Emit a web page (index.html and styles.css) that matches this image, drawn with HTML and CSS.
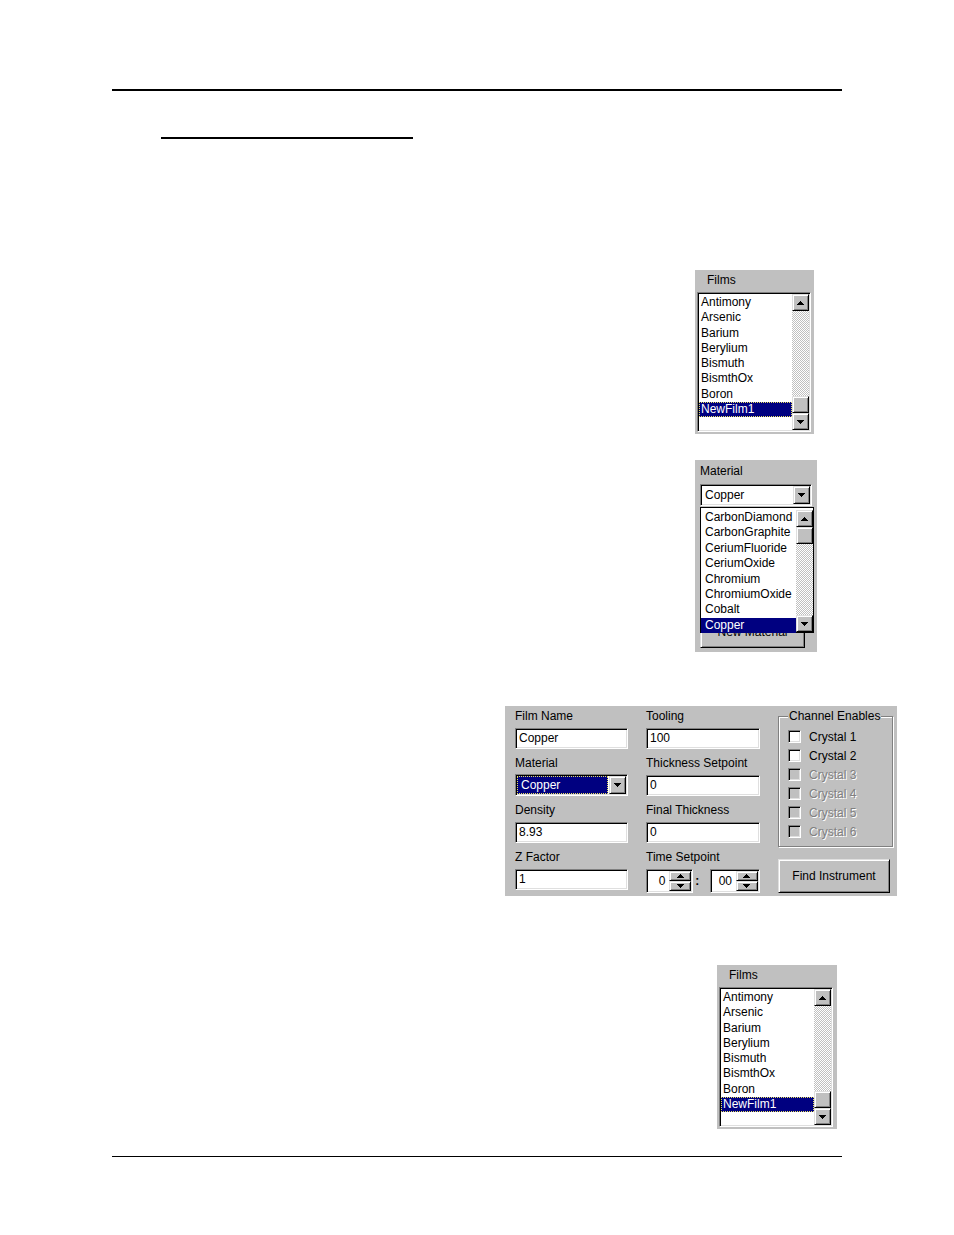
FILE: index.html
```html
<!DOCTYPE html>
<html lang="en">
<head>
<meta charset="utf-8">
<title>Films</title>
<link rel="stylesheet" href="styles.css">
</head>
<body>
<div class="page">
  <div class="rule rule-top"></div>
  <div class="rule rule-sub"></div>

  <!-- Films list 1 -->
  <div class="panel films films-1">
    <div class="films-label">Films</div>
    <div class="listbox films-list">
      <ul class="items film-items">
        <li>Antimony</li>
        <li>Arsenic</li>
        <li>Barium</li>
        <li>Berylium</li>
        <li>Bismuth</li>
        <li>BismthOx</li>
        <li>Boron</li>
        <li class="sel">NewFilm1</li>
      </ul>
      <div class="vscroll">
        <div class="raised sbtn"><svg width="7" height="4" viewBox="0 0 7 4"><path d="M3 0h1v1h1v1h1v1h1v1H0V3h1V2h1V1h1z"/></svg></div>
        <div class="track"></div>
        <div class="raised sthumb"></div>
        <div class="raised sbtn"><svg width="7" height="4" viewBox="0 0 7 4"><path d="M0 0h7v1H6v1H5v1H4v1H3V3H2V2H1V1H0z"/></svg></div>
      </div>
    </div>
  </div>

  <!-- Material combo with dropdown -->
  <div class="panel material">
    <div class="mat-label">Material</div>
    <div class="sunken combo">
      <span class="combo-text">Copper</span>
      <div class="raised cbtn"><svg width="7" height="4" viewBox="0 0 7 4"><path d="M0 0h7v1H6v1H5v1H4v1H3V3H2V2H1V1H0z"/></svg></div>
    </div>
    <div class="raised newmat">New Material</div>
    <div class="dropdown">
      <ul class="items drop-items">
        <li>CarbonDiamond</li>
        <li>CarbonGraphite</li>
        <li>CeriumFluoride</li>
        <li>CeriumOxide</li>
        <li>Chromium</li>
        <li>ChromiumOxide</li>
        <li>Cobalt</li>
        <li class="sel plain">Copper</li>
      </ul>
      <div class="vscroll">
        <div class="raised sbtn"><svg width="7" height="4" viewBox="0 0 7 4"><path d="M3 0h1v1h1v1h1v1h1v1H0V3h1V2h1V1h1z"/></svg></div>
        <div class="raised sthumb"></div>
        <div class="track"></div>
        <div class="raised sbtn"><svg width="7" height="4" viewBox="0 0 7 4"><path d="M0 0h7v1H6v1H5v1H4v1H3V3H2V2H1V1H0z"/></svg></div>
      </div>
    </div>
  </div>

  <!-- Film properties form -->
  <div class="panel form">
    <div class="col">
      <div class="field">
        <div class="flabel">Film Name</div>
        <div class="sunken tbox">Copper</div>
      </div>
      <div class="field">
        <div class="flabel">Material</div>
        <div class="sunken combo form-combo">
          <span class="combo-sel">Copper</span>
          <div class="raised cbtn"><svg width="7" height="4" viewBox="0 0 7 4"><path d="M0 0h7v1H6v1H5v1H4v1H3V3H2V2H1V1H0z"/></svg></div>
        </div>
      </div>
      <div class="field">
        <div class="flabel">Density</div>
        <div class="sunken tbox">8.93</div>
      </div>
      <div class="field">
        <div class="flabel">Z Factor</div>
        <div class="sunken tbox">1</div>
      </div>
    </div>

    <div class="col">
      <div class="field">
        <div class="flabel">Tooling</div>
        <div class="sunken tbox">100</div>
      </div>
      <div class="field">
        <div class="flabel">Thickness Setpoint</div>
        <div class="sunken tbox">0</div>
      </div>
      <div class="field">
        <div class="flabel">Final Thickness</div>
        <div class="sunken tbox">0</div>
      </div>
      <div class="field">
        <div class="flabel">Time Setpoint</div>
        <div class="spin-row">
          <div class="sunken spin spin-1">
            <span class="spin-val">0</span>
            <div class="spin-btns">
              <div class="raised spbtn"><svg width="7" height="4" viewBox="0 0 7 4"><path d="M3 0h1v1h1v1h1v1h1v1H0V3h1V2h1V1h1z"/></svg></div>
              <div class="raised spbtn"><svg width="7" height="4" viewBox="0 0 7 4"><path d="M0 0h7v1H6v1H5v1H4v1H3V3H2V2H1V1H0z"/></svg></div>
            </div>
          </div>
          <span class="colon">:</span>
          <div class="sunken spin spin-2">
            <span class="spin-val">00</span>
            <div class="spin-btns">
              <div class="raised spbtn"><svg width="7" height="4" viewBox="0 0 7 4"><path d="M3 0h1v1h1v1h1v1h1v1H0V3h1V2h1V1h1z"/></svg></div>
              <div class="raised spbtn"><svg width="7" height="4" viewBox="0 0 7 4"><path d="M0 0h7v1H6v1H5v1H4v1H3V3H2V2H1V1H0z"/></svg></div>
            </div>
          </div>
        </div>
      </div>
    </div>

    <div class="col col3">
      <fieldset class="group">
        <legend>Channel Enables</legend>
        <div class="check-row"><span class="chk"></span><span>Crystal 1</span></div>
        <div class="check-row"><span class="chk"></span><span>Crystal 2</span></div>
        <div class="check-row disabled"><span class="chk"></span><span>Crystal 3</span></div>
        <div class="check-row disabled"><span class="chk"></span><span>Crystal 4</span></div>
        <div class="check-row disabled"><span class="chk"></span><span>Crystal 5</span></div>
        <div class="check-row disabled"><span class="chk"></span><span>Crystal 6</span></div>
      </fieldset>
      <div class="raised find-btn">Find Instrument</div>
    </div>
  </div>

  <!-- Films list 2 -->
  <div class="panel films films-2">
    <div class="films-label">Films</div>
    <div class="listbox films-list">
      <ul class="items film-items">
        <li>Antimony</li>
        <li>Arsenic</li>
        <li>Barium</li>
        <li>Berylium</li>
        <li>Bismuth</li>
        <li>BismthOx</li>
        <li>Boron</li>
        <li class="sel">NewFilm1</li>
      </ul>
      <div class="vscroll">
        <div class="raised sbtn"><svg width="7" height="4" viewBox="0 0 7 4"><path d="M3 0h1v1h1v1h1v1h1v1H0V3h1V2h1V1h1z"/></svg></div>
        <div class="track"></div>
        <div class="raised sthumb"></div>
        <div class="raised sbtn"><svg width="7" height="4" viewBox="0 0 7 4"><path d="M0 0h7v1H6v1H5v1H4v1H3V3H2V2H1V1H0z"/></svg></div>
      </div>
    </div>
  </div>

  <div class="rule rule-bottom"></div>
</div>
</body>
</html>
```

FILE: styles.css
```css
* { box-sizing: border-box; }

html, body {
  margin: 0;
  padding: 0;
  background: #fff;
}

body {
  font-family: "Liberation Sans", Arial, sans-serif;
  font-size: 12px;
  color: #000;
}

.page {
  width: 954px;
  height: 1235px;
  overflow: hidden;
  padding-top: 89px;
}

/* Rules */
.rule { background: #000; }
.rule-top { margin-left: 112px; width: 730px; height: 2px; }
.rule-sub { margin-top: 46px; margin-left: 161px; width: 252px; height: 2px; }
.rule-bottom { margin-top: 27px; margin-left: 112px; width: 730px; height: 1px; }

/* Generic Win95 pieces */
.panel { background: #c0c0c0; }

.sunken {
  background: #fff;
  border: 1px solid;
  border-color: #808080 #fff #fff #808080;
  padding: 1px;
  box-shadow: inset 1px 1px 0 #000, inset -1px -1px 0 #dfdfdf;
}

.raised {
  background: #c0c0c0;
  border: 1px solid;
  border-color: #dfdfdf #000 #000 #dfdfdf;
  box-shadow: inset 1px 1px 0 #fff, inset -1px -1px 0 #808080;
}

.raised svg { display: block; shape-rendering: crispEdges; fill: #000; }

.items {
  list-style: none;
  margin: 0;
  padding: 0;
  flex: 1;
  min-width: 0;
}

.items li {
  height: 15px;
  line-height: 15px;
  padding-left: 2px;
  white-space: nowrap;
}

.film-items { padding-top: 1px; }
.film-items li { height: 15.3px; line-height: 15.3px; }

.items li.sel {
  background: #000080;
  color: #fff;
  outline: 1px dotted #e8e060;
  outline-offset: -1px;
}

.items li.sel.plain { outline: none; }

.vscroll {
  width: 17px;
  display: flex;
  flex-direction: column;
  flex: none;
}

.sbtn, .sthumb {
  height: 17px;
  flex: none;
  display: flex;
  align-items: center;
  justify-content: center;
}

.track {
  flex: 1;
  background: repeating-conic-gradient(#c0c0c0 0 25%, #fff 0 50%) 0 0 / 2px 2px;
}

/* Films panels */
.films {
  height: 164px;
  padding: 3px 0 0 2px;
}
.films-1 { width: 119px; margin-top: 131px; margin-left: 695px; }
.films-2 { width: 120px; margin-top: 69px; margin-left: 717px; }

.films-label {
  height: 14px;
  line-height: 14px;
  padding-left: 10px;
}

.listbox {
  background: #fff;
  border: 1px solid;
  border-color: #808080 #fff #fff #808080;
  padding: 1px;
  box-shadow: inset 1px 1px 0 #000, inset -1px -1px 0 #dfdfdf;
  display: flex;
}

.films-list {
  margin-top: 5px;
  width: 114px;
  height: 140px;
}

/* Material panel */
.material {
  position: relative;
  width: 122px;
  height: 192px;
  margin-top: 26px;
  margin-left: 695px;
  padding: 4px 0 0 5px;
}

.mat-label { height: 14px; line-height: 14px; }

.combo {
  display: flex;
  align-items: center;
  width: 112px;
  height: 22px;
  margin-top: 6px;
}

.combo-text { padding-left: 3px; flex: 1; }

.cbtn {
  width: 17px;
  height: 18px;
  flex: none;
  display: flex;
  align-items: center;
  justify-content: center;
}

.newmat {
  margin-top: 114px;
  width: 105px;
  height: 28px;
  line-height: 22px;
  text-align: center;
}

.dropdown {
  position: absolute;
  left: 5px;
  top: 47px;
  width: 114px;
  height: 126px;
  background: #fff;
  border: 1px solid #000;
  display: flex;
}

.drop-items { padding-top: 2px; }
.drop-items li { height: 15.4px; line-height: 15.4px; padding-left: 4px; }
.dropdown .vscroll { padding-top: 2px; }

/* Form panel */
.form {
  width: 392px;
  height: 190px;
  margin-top: 54px;
  margin-left: 505px;
  padding: 3px 4px 3px 10px;
  display: grid;
  grid-template-columns: 113px 114px 115px;
  column-gap: 18px;
}

.col { display: flex; flex-direction: column; }

.field + .field { margin-top: 7px; }

.flabel { height: 14px; line-height: 14px; white-space: nowrap; }

.tbox {
  margin-top: 5px;
  height: 21px;
  line-height: 17px;
  padding-left: 3px;
}

.form-combo {
  width: 113px;
  margin-top: 4px;
  height: 22px;
}

.combo-sel {
  flex: 1;
  height: 18px;
  line-height: 18px;
  padding-left: 4px;
  margin-right: 1px;
  background: #000080;
  color: #fff;
  outline: 1px dotted #e8e060;
  outline-offset: -1px;
}

.spin-row {
  margin-top: 5px;
  display: flex;
  align-items: center;
}

.spin {
  display: flex;
  height: 24px;
}
.spin-1 { width: 49px; }
.spin-2 { width: 52px; }

.spin-val {
  flex: 1;
  text-align: right;
  padding-right: 4px;
  line-height: 20px;
}

.spin-btns {
  width: 22px;
  display: flex;
  flex-direction: column;
}

.spbtn {
  flex: 1;
  display: flex;
  align-items: center;
  justify-content: center;
}

.colon {
  width: 17px;
  padding-left: 2px;
  line-height: 20px;
  font-weight: bold;
}

/* Channel Enables */
.group {
  margin: 0;
  width: 115px;
  min-width: 0;
  padding: 4px 0 5px 9px;
  border: 1px solid #808080;
  box-shadow: inset 1px 1px 0 #fff, 1px 1px 0 #fff;
}

.group legend {
  padding: 0 1px;
  line-height: 14px;
  background: #c0c0c0;
  white-space: nowrap;
}

.check-row {
  height: 19px;
  display: flex;
  align-items: center;
  white-space: nowrap;
}

.chk {
  width: 13px;
  height: 13px;
  margin-right: 8px;
  flex: none;
  background: #fff;
  border: 1px solid;
  border-color: #808080 #fff #fff #808080;
  box-shadow: inset 1px 1px 0 #000, inset -1px -1px 0 #dfdfdf;
}

.check-row.disabled { color: #808080; text-shadow: 1px 1px 0 #fff; }
.check-row.disabled .chk { background: #c0c0c0; }

.find-btn {
  margin-top: 12px;
  width: 112px;
  height: 34px;
  line-height: 32px;
  text-align: center;
  white-space: nowrap;
}
```
